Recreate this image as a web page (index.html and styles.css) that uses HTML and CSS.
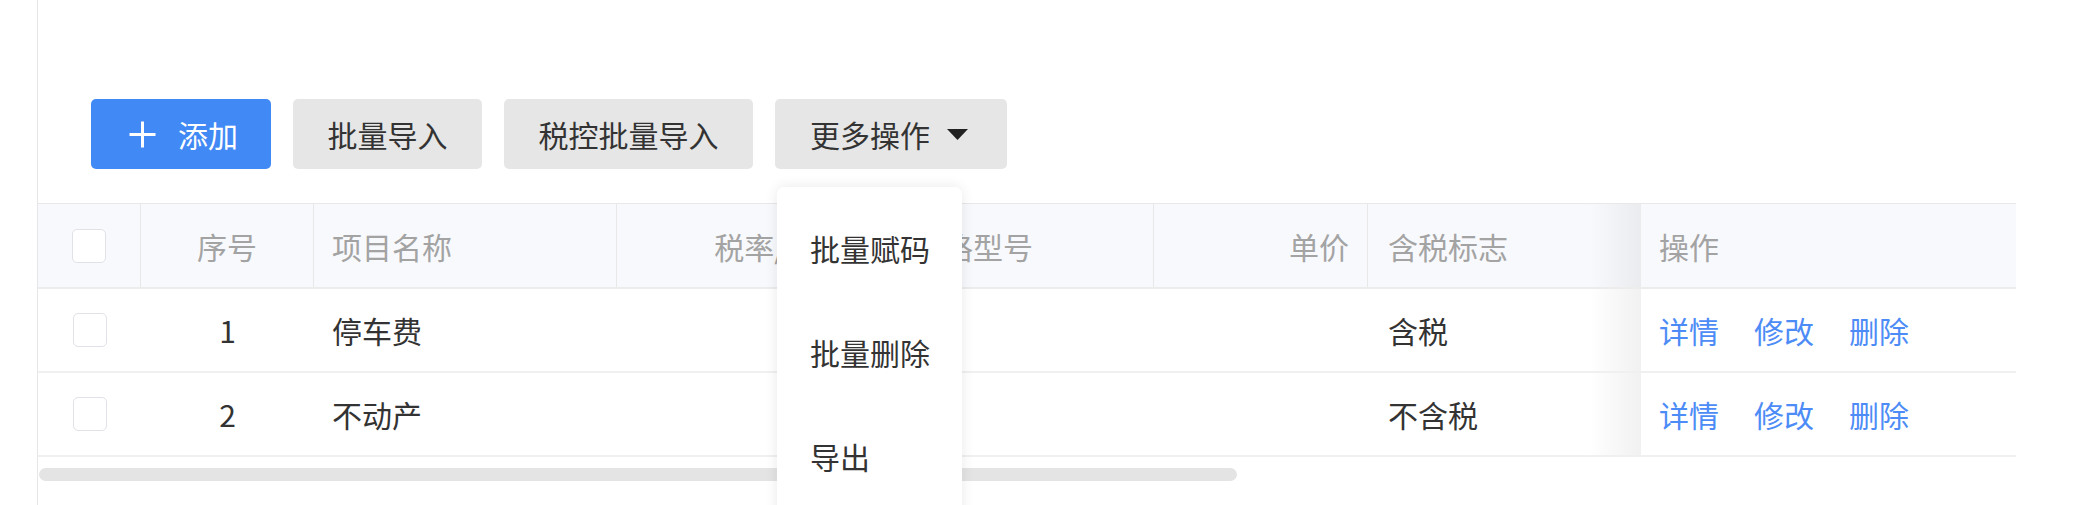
FILE: index.html
```html
<!DOCTYPE html>
<html lang="zh-CN">
<head>
<meta charset="utf-8">
<title>商品列表</title>
<link rel="stylesheet" href="styles.css">
</head>
<body>
<div class="page">
  <div class="toolbar">
    <button class="btn btn-primary">
      <svg class="icon-plus" width="27" height="27" viewBox="0 0 27 27"><path d="M13.5 0.5V26.5M0.5 13.5H26.5" stroke="#fff" stroke-width="3" fill="none"/></svg>
      <span>添加</span>
    </button>
    <button class="btn">批量导入</button>
    <button class="btn">税控批量导入</button>
    <div class="dropdown">
      <button class="btn btn-more">
        <span>更多操作</span>
        <svg class="caret" width="21" height="11" viewBox="0 0 21 11"><polygon points="0,0 21,0 10.5,11" fill="#222"/></svg>
      </button>
      <ul class="menu">
        <li>批量赋码</li>
        <li>批量删除</li>
        <li>导出</li>
      </ul>
    </div>
  </div>

  <div class="table">
    <div class="row head">
      <div class="cell c-check div"><span class="checkbox"></span></div>
      <div class="cell c-center div">序号</div>
      <div class="cell c-left div">项目名称</div>
      <div class="cell c-right c-rate div">税率/征收率</div>
      <div class="cell c-left div">规格型号</div>
      <div class="cell c-right div">单价</div>
      <div class="cell c-left c-tax">含税标志</div>
      <div class="cell c-left c-op">操作</div>
    </div>
    <div class="row">
      <div class="cell c-check"><span class="checkbox"></span></div>
      <div class="cell c-center">1</div>
      <div class="cell c-left">停车费</div>
      <div class="cell c-right"></div>
      <div class="cell c-left"></div>
      <div class="cell c-right"></div>
      <div class="cell c-left c-tax">含税</div>
      <div class="cell c-left c-op">
        <span class="links"><a>详情</a><a>修改</a><a>删除</a></span>
      </div>
    </div>
    <div class="row">
      <div class="cell c-check"><span class="checkbox"></span></div>
      <div class="cell c-center">2</div>
      <div class="cell c-left">不动产</div>
      <div class="cell c-right"></div>
      <div class="cell c-left"></div>
      <div class="cell c-right"></div>
      <div class="cell c-left c-tax">不含税</div>
      <div class="cell c-left c-op">
        <span class="links"><a>详情</a><a>修改</a><a>删除</a></span>
      </div>
    </div>
  </div>
  <div class="scrollbar"><div class="thumb"></div></div>
</div>
</body>
</html>
```

FILE: styles.css
```css
* { box-sizing: border-box; }

html, body {
  margin: 0;
  padding: 0;
  background: #fff;
  height: 505px;
  overflow: hidden;
}

body {
  font-family: "Noto Sans CJK SC", "Noto Sans", sans-serif;
  font-size: 30px;
  color: #333;
}

.page {
  margin-left: 37px;
  border-left: 1px solid #e6e6e6;
  height: 505px;
  width: 1979px;
}

.toolbar {
  display: flex;
  gap: 22px;
  padding: 99px 0 0 53px;
  height: 169px;
}

.btn {
  height: 70px;
  border: none;
  border-radius: 5px;
  background: #e6e6e6;
  color: #333;
  font-family: inherit;
  font-size: 30px;
  line-height: 1;
  padding: 0 34.5px;
  display: flex;
  align-items: center;
  cursor: pointer;
}

.btn-primary {
  background: #4189f5;
  color: #fff;
  padding: 0 33px 0 38px;
  gap: 22px;
}

.btn-more {
  padding: 0 39px 0 35px;
  gap: 17px;
}

.icon-plus { display: block; }
.caret { display: block; }

.dropdown {
  position: relative;
}

.menu {
  position: absolute;
  top: calc(100% + 18px);
  left: 2px;
  width: 185px;
  height: 340px;
  margin: 0;
  padding: 9px 0 0;
  list-style: none;
  background: #fff;
  border-radius: 7px;
  box-shadow: 0 0 14px rgba(0, 0, 0, 0.09);
  z-index: 10;
}

.menu li {
  height: 104px;
  line-height: 104px;
  padding-left: 33px;
  color: #333;
  white-space: nowrap;
}

.table {
  margin-top: 34px;
  width: 1978px;
  border-top: 1px solid #e8e8e8;
}

.row {
  display: grid;
  grid-template-columns: 103px 173px 303px 278px 259px 214px 273px 375px;
  height: 84px;
  border-bottom: 2px solid #f0f0f0;
  background: #fff;
}

.row.head {
  height: 85px;
  background: #f8f9fc;
  color: #a3a3a3;
  border-bottom-color: #ececec;
}

.cell {
  display: flex;
  align-items: center;
  white-space: nowrap;
  overflow: hidden;
}

.head .div { border-right: 1px solid #e8e8e8; }

.c-check { justify-content: center; }
.c-center { justify-content: center; }
.c-left { padding-left: 18px; }
.c-right { justify-content: flex-end; padding-right: 18px; }
.c-rate { padding-right: 18px; }
.c-tax { padding-left: 20px; }

.c-op {
  position: relative;
  overflow: visible;
}

.c-op::before {
  content: "";
  position: absolute;
  top: 0;
  bottom: 0;
  left: -52px;
  width: 52px;
  background: linear-gradient(to right, rgba(0, 0, 0, 0), rgba(0, 0, 0, 0.055));
  pointer-events: none;
}

.checkbox {
  width: 34px;
  height: 34px;
  border: 1.5px solid #e0e2e8;
  border-radius: 5px;
  background: #fff;
  display: block;
}

.links {
  display: flex;
  gap: 35px;
}

.links a {
  color: #4d8cf6;
  cursor: pointer;
}

.scrollbar {
  margin-top: 11px;
  padding-left: 1px;
  height: 13px;
}

.thumb {
  width: 1198px;
  height: 13px;
  border-radius: 7px;
  background: #e4e4e4;
}
```
